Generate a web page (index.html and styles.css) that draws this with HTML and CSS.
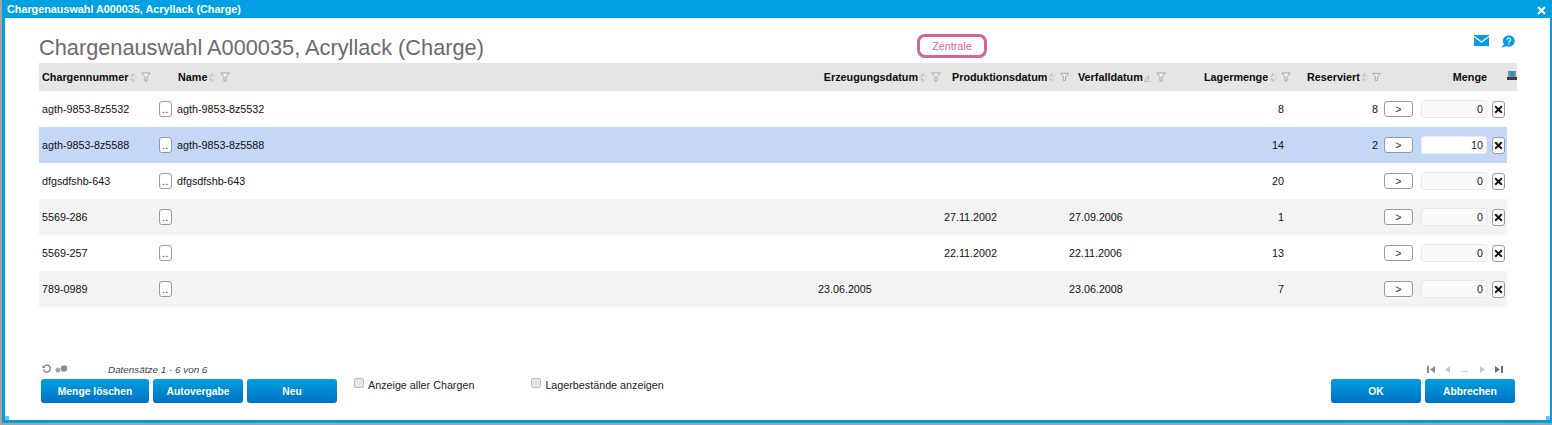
FILE: index.html
```html
<!DOCTYPE html>
<html lang="de">
<head>
<meta charset="utf-8">
<title>Chargenauswahl</title>
<link rel="stylesheet" href="styles.css">
</head>
<body>
<svg class="defs" width="0" height="0" aria-hidden="true">
  <symbol id="sort" viewBox="0 0 8 11">
    <path d="M4.500 .5 1 4.500h2.200l1.300-1.300z" fill="#bdbdbd"/>
    <path d="M4.500 10.500 1 6.500h2.200l1.300 1.300z" fill="#bdbdbd"/>
    <path d="M5 1 8 4.800H5.800z" fill="#d6d6d6"/>
    <path d="M5 10 8 6.200H5.800z" fill="#d6d6d6"/>
  </symbol>
  <symbol id="sortup" viewBox="0 0 8 11">
    <path d="M.5 9.500 4.500 3.500v6z" fill="none" stroke="#bdbdbd"/>
    <path d="M4.500 9.500h3.500" stroke="#d6d6d6"/>
  </symbol>
  <symbol id="filter" viewBox="0 0 10 10">
    <path d="M.8 1h8.400L6 4.800v3.800L4 9.200V4.800z" fill="#f4f4f4" stroke="#9c9c9c" stroke-width=".9"/>
  </symbol>
  <symbol id="x" viewBox="0 0 9 9">
    <path d="M1.200 1.200l6.600 6.600M7.800 1.200 1.200 7.800" stroke="#111" stroke-width="2"/>
  </symbol>
</svg>
<div class="window">
  <header class="titlebar">
    <span>Chargenauswahl A000035, Acryllack (Charge)</span>
    <svg class="close" width="9" height="9" viewBox="0 0 9 9"><path d="M1 1l7 7M8 1 1 8" stroke="#fff" stroke-width="2.200"/></svg>
  </header>
  <main class="panel">
    <div class="heading">
      <h1>Chargenauswahl A000035, Acryllack (Charge)</h1>
      <div class="badge">Zentrale</div>
      <div class="tools">
        <svg width="15" height="11" viewBox="0 0 15 11"><rect width="15" height="11" fill="#0a9ce2"/><path d="M0 1.500 7.500 7 15 1.500" fill="none" stroke="#fff" stroke-width="1.300"/></svg>
        <svg width="14" height="13" viewBox="0 0 14 13"><ellipse cx="7.800" cy="6" rx="6" ry="5.800" fill="#0a9ce2"/><path d="M3.500 8.500.5 12.800l5-1.500z" fill="#0a9ce2"/><path d="M6.200 4.800a1.700 1.700 0 1 1 2.500 1.400c-.6.400-.9.700-.9 1.300" fill="none" stroke="#e8f6fd" stroke-width="1.200"/><rect x="7.100" y="8.300" width="1.300" height="1.300" fill="#e8f6fd"/></svg>
      </div>
    </div>
    <div class="table">
      <div class="row head">
        <div class="h c-num">Chargennummer<svg class="si"><use href="#sort"/></svg><svg class="fi"><use href="#filter"/></svg></div>
        <div class="h c-name">Name<svg class="si"><use href="#sort"/></svg><svg class="fi"><use href="#filter"/></svg></div>
        <div class="h c-erz">Erzeugungsdatum<svg class="si"><use href="#sort"/></svg><svg class="fi"><use href="#filter"/></svg></div>
        <div class="h c-prod">Produktionsdatum<svg class="si"><use href="#sort"/></svg><svg class="fi"><use href="#filter"/></svg></div>
        <div class="h c-verf">Verfalldatum<svg class="si"><use href="#sortup"/></svg><svg class="fi"><use href="#filter"/></svg></div>
        <div class="h c-lag">Lagermenge<svg class="si"><use href="#sort"/></svg><svg class="fi"><use href="#filter"/></svg></div>
        <div class="h c-res">Reserviert<svg class="si"><use href="#sort"/></svg><svg class="fi"><use href="#filter"/></svg></div>
        <div class="h c-menge">Menge</div>
        <div class="c-cfg"><svg width="10" height="9" viewBox="0 0 10 9"><rect x="1" y="0" width="8" height="6" fill="#8a8f96"/><path d="M3.500 0h3v2.500H8L5 6 2 2.500h1.500z" fill="#0a9ce2"/><rect x="0" y="6" width="10" height="3" fill="#3a3f46"/></svg></div>
      </div>

      <div class="row">
        <div class="t">agth-9853-8z5532</div><button class="dots">..</button><div class="name">agth-9853-8z5532</div>
        <div class="erz"></div><div class="prod"></div><div class="verf"></div><div class="lag">8</div><div class="res">8</div>
        <button class="go">&gt;</button><input class="qty" value="0"><button class="del"><svg width="9" height="9"><use href="#x"/></svg></button>
      </div>
      <div class="row sel">
        <div class="t">agth-9853-8z5588</div><button class="dots">..</button><div class="name">agth-9853-8z5588</div>
        <div class="erz"></div><div class="prod"></div><div class="verf"></div><div class="lag">14</div><div class="res">2</div>
        <button class="go">&gt;</button><input class="qty" value="10"><button class="del"><svg width="9" height="9"><use href="#x"/></svg></button>
      </div>
      <div class="row">
        <div class="t">dfgsdfshb-643</div><button class="dots">..</button><div class="name">dfgsdfshb-643</div>
        <div class="erz"></div><div class="prod"></div><div class="verf"></div><div class="lag">20</div><div class="res"></div>
        <button class="go">&gt;</button><input class="qty" value="0"><button class="del"><svg width="9" height="9"><use href="#x"/></svg></button>
      </div>
      <div class="row alt">
        <div class="t">5569-286</div><button class="dots">..</button><div class="name"></div>
        <div class="erz"></div><div class="prod">27.11.2002</div><div class="verf">27.09.2006</div><div class="lag">1</div><div class="res"></div>
        <button class="go">&gt;</button><input class="qty" value="0"><button class="del"><svg width="9" height="9"><use href="#x"/></svg></button>
      </div>
      <div class="row">
        <div class="t">5569-257</div><button class="dots">..</button><div class="name"></div>
        <div class="erz"></div><div class="prod">22.11.2002</div><div class="verf">22.11.2006</div><div class="lag">13</div><div class="res"></div>
        <button class="go">&gt;</button><input class="qty" value="0"><button class="del"><svg width="9" height="9"><use href="#x"/></svg></button>
      </div>
      <div class="row alt">
        <div class="t">789-0989</div><button class="dots">..</button><div class="name"></div>
        <div class="erz">23.06.2005</div><div class="prod"></div><div class="verf">23.06.2008</div><div class="lag">7</div><div class="res"></div>
        <button class="go">&gt;</button><input class="qty" value="0"><button class="del"><svg width="9" height="9"><use href="#x"/></svg></button>
      </div>
    </div>

    <div class="status">
      <div class="reload">
        <svg width="10" height="10" viewBox="0 0 10 10"><path d="M2 2.600A3.500 3.500 0 1 1 1.500 5.500" fill="none" stroke="#808080" stroke-width="1.300"/><path d="M.500 1v3h3z" fill="#808080"/></svg>
        <svg width="13" height="8" viewBox="0 0 13 8"><circle cx="3" cy="5" r="2.500" fill="#a5a5a5"/><circle cx="9" cy="3.500" r="3.200" fill="#8c8c8c"/></svg>
      </div>
      <div class="count">Datensätze 1 - 6 von 6</div>
      <div class="pager">
        <svg width="8" height="7" viewBox="0 0 8 7"><rect width="2" height="7" fill="#8c8c8c"/><path d="M8 0v7L3 3.500z" fill="#8c8c8c"/></svg>
        <svg width="5" height="7" viewBox="0 0 5 7"><path d="M5 0v7L0 3.500z" fill="#c8c8c8"/></svg>
        <span>...</span>
        <svg width="5" height="7" viewBox="0 0 5 7"><path d="M0 0v7l5-3.500z" fill="#c8c8c8"/></svg>
        <svg width="8" height="7" viewBox="0 0 8 7"><path d="M0 0v7l5-3.500z" fill="#6e6e6e"/><rect x="6" width="2" height="7" fill="#6e6e6e"/></svg>
      </div>
    </div>
    <footer class="actions">
      <button class="btn w108">Menge löschen</button>
      <button class="btn w90">Autovergabe</button>
      <button class="btn w90">Neu</button>
      <label class="check first"><input type="checkbox"><span>Anzeige aller Chargen</span></label>
      <label class="check second"><input type="checkbox"><span>Lagerbestände anzeigen</span></label>
      <button class="btn w90 push">OK</button>
      <button class="btn w90">Abbrechen</button>
    </footer>
  </main>
  <i class="grip left"></i>
  <i class="grip right"></i>
</div>
</body>
</html>
```
FILE: styles.css
```css
* { box-sizing: border-box; }
html, body { margin: 0; height: 100%; overflow: hidden; }
body { background: #a5a5a5; padding: 0 0 2px 2px; font: 10.750px "Liberation Sans", Arial, sans-serif; color: #111; }
.defs { position: absolute; }
.window {
  position: relative; height: 423px; display: flex; flex-direction: column;
  background: #fff; border: solid #00a0e3; border-width: 0 2px 3px 3px;
}
.titlebar {
  flex: none; height: 18px; margin: 0 -2px 0 -3px; padding: 0 6px 0 5px; background: #00a0e3;
  display: flex; align-items: center; justify-content: space-between;
  color: #fff; font-weight: bold; font-size: 10.800px;
}
.close { margin-top: 2px; }
.panel { flex: 1; display: flex; flex-direction: column; padding: 0 0 0 34px; }
.heading { flex: none; height: 45px; display: flex; align-items: flex-start; }
h1 { margin: 18px 0 0; font-size: 21.750px; font-weight: normal; line-height: 24px; color: #6b6b6b; white-space: nowrap; }
.badge {
  margin: 16px 0 0 433px; width: 70px; height: 24px; border: 3px solid #cf659b; border-radius: 8px;
  color: #d4689f; text-align: center; line-height: 18px; font-size: 10.750px;
}
.tools { margin: 17px 35px 0 auto; display: flex; gap: 12px; align-items: flex-start; }

.table { flex: none; width: 1478px; }
.row {
  display: grid; height: 36px; width: 1468px; align-items: center;
  grid-template-columns: 120px 18px 583px 184px 125px 131px 100px 81px 40px 71px 15px;
}
.row.head { width: 1478px; height: 28px; background: #e5e5e5; grid-template-columns: 120px 18px 583px 184px 125px 131px 100px 81px 111px 15px 10px; }
.alt { background: #f3f3f3; }
.sel { background: #c4d7f7; }
.h { font-weight: bold; font-size: 10.800px; white-space: nowrap; display: flex; align-items: center; color: #0c0c0c; }
.c-num { grid-column: 1 / 3; padding-left: 3px; }
.c-name { padding-left: 1px; }
.c-erz { justify-content: flex-end; padding-right: 3px; }
.c-prod { padding-left: 8px; }
.c-verf { padding-left: 9px; }
.c-lag { padding-left: 4px; }
.c-res { padding-left: 7px; }
.c-menge { justify-content: flex-end; padding-right: 5px; }
.c-cfg { grid-column: 10 / 12; display: flex; justify-content: flex-end; padding-bottom: 3px; }
.si { width: 8px; height: 11px; margin-left: 1px; }
.fi { width: 10px; height: 10px; margin-left: 4px; }

.t { padding-left: 3px; white-space: nowrap; }
.name { white-space: nowrap; }
.erz { padding-left: 58px; }
.lag { text-align: right; padding-right: 16px; }
.res { text-align: right; padding-right: 3px; }

button { font-family: inherit; cursor: default; }
.dots, .go, .del {
  display: block; padding: 0; background: #fff; border: 1px solid #9a9a9a; border-radius: 3px; color: #222;
}
.dots { width: 13px; height: 16px; font-size: 10px; line-height: 15px; letter-spacing: .5px; }
.go { width: 29px; height: 16px; margin-left: 3px; font-size: 10px; line-height: 13px; }
.qty {
  width: 66px; height: 18px; padding: 0 3px; text-align: right; font: 10.750px "Liberation Sans", Arial, sans-serif; color: #222;
  background: #fafafa; border: 1px solid #e8e8e8; border-radius: 3px; outline: 0;
}
.sel .qty { background: #fff; border-color: #e8eefa; }
.del { width: 13px; height: 17px; display: flex; align-items: center; justify-content: center; }

.status { margin-top: auto; margin-bottom: 3px; flex: none; height: 14px; display: flex; align-items: center; padding-left: 3px; padding-right: 47px; }
.reload { width: 66px; display: flex; gap: 3px; align-items: center; }
.count { font-style: italic; font-size: 9.900px; color: #444; }
.pager { margin-left: auto; display: flex; gap: 10px; align-items: center; font-size: 9px; color: #999; }
.pager span { width: 10px; text-align: center; }
.actions { flex: none; height: 24px; margin-bottom: 17px; display: flex; padding-left: 2px; padding-right: 35px; gap: 4px; }
.btn {
  height: 24px; padding: 0; border: 0; border-radius: 3px; color: #fff; font-weight: bold; font-size: 10.300px;
  background: linear-gradient(#00a0dc, #0071c5);
}
.w108 { width: 108px; }
.w90 { width: 90px; }
.push { margin-left: auto; }
.check { display: flex; align-items: flex-start; gap: 4px; color: #222; height: 14px; margin-top: -1px; line-height: 15px; }
.check.first { margin-left: 13px; }
.check.second { margin-left: 53px; }
.check input {
  appearance: none; margin: 0; width: 10px; height: 10px; background: #e6e6e6; border: 1px solid #bdbdbd; border-radius: 2px;
}
.grip { position: absolute; bottom: 0; width: 4px; height: 4px; background: #6cc4f0; }
.grip.left { left: 0; }
.grip.right { right: 0; }
```
